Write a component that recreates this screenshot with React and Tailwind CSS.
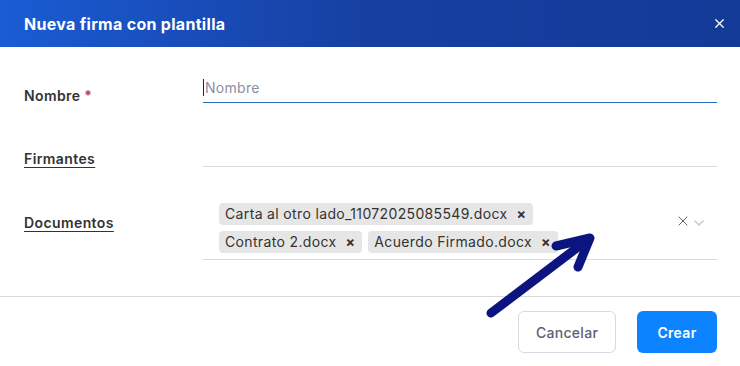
import { X, ChevronDown } from 'lucide-react'

function Tag({ label }) {
  return (
    <span className="inline-flex items-center h-[22px] pl-[6px] pr-[7px] rounded-[4px] bg-[#e6e6e6] text-[14px] tracking-[0.35px] text-[#333] leading-none">
      {label}
      <span className="ml-[9px] text-[14px] font-bold text-[#333]">×</span>
    </span>
  )
}

export default function App() {
  return (
    <div className="relative w-[740px] h-[366px] bg-white overflow-hidden" style={{ fontFamily: 'Inter, "Noto Sans", sans-serif' }}>
      {/* Header */}
      <header className="h-[47px] flex items-center justify-between pl-[24px] pr-[13px] bg-gradient-to-r from-[#1a5cd4] via-[#163fa0] to-[#143a98]">
        <h1 className="text-white font-bold text-[16px] tracking-[0.3px]">Nueva firma con plantilla</h1>
        <X className="w-[15px] h-[15px] text-white" strokeWidth={2} />
      </header>

      {/* Body */}
      <div className="pl-[24px] pr-[23px]">
        <div className="flex items-end h-[56px]">
          <div className="w-[179px] leading-[14px] text-[14px] font-semibold tracking-[0.4px] text-[#333]">
            Nombre <span className="text-[#c0392b]">*</span>
          </div>
          <div className="flex-1 relative border-b-[1.5px] border-[#2b6cc4] h-[31px] flex items-center">
            <span className="w-px h-[17px] bg-[#222] mr-[1px]" />
            <span className="text-[14px] tracking-[0.3px] text-[#8a8fa3]">Nombre</span>
          </div>
        </div>

        <div className="flex items-end h-[64px]">
          <div className="w-[179px] pb-[1px] leading-[14px] text-[14px] font-semibold tracking-[0.4px] text-[#333] underline underline-offset-[3px]">Firmantes</div>
          <div className="flex-1 border-b border-[#d9d9e0] h-[31px]" />
        </div>

        <div className="flex items-center h-[93px]">
          <div className="w-[179px] text-[14px] font-semibold tracking-[0.4px] text-[#333] underline underline-offset-[3px] pt-[17px]">Documentos</div>
          <div className="flex-1 border-b border-[#d9d9e0] mt-[36px] pb-[6px] pl-[16px] flex items-center">
            <div className="flex-1 flex flex-wrap gap-x-[6px] gap-y-[6px] w-[360px] max-w-[360px]">
              <Tag label="Carta al otro lado_11072025085549.docx" />
              <Tag label="Contrato 2.docx" />
              <Tag label="Acuerdo Firmado.docx" />
            </div>
            <div className="ml-auto flex items-center mr-[10px] -mt-[14px]">
              <X className="w-[16px] h-[16px] text-[#555]" strokeWidth={1.4} />
              <ChevronDown className="w-[16px] h-[16px] text-[#ccc] mt-[3px]" strokeWidth={2.5} />
            </div>
          </div>
        </div>
      </div>

      {/* Footer */}
      <div className="mt-[36px] border-t border-[#d9d9e0] flex justify-end gap-[21px] pt-[14px] pr-[23px]">
        <button className="w-[98px] h-[42px] rounded-[6px] border border-[#d9d9e3] bg-white text-[14px] font-medium tracking-[0.3px] text-[#5c5f73]">Cancelar</button>
        <button className="w-[80px] h-[42px] rounded-[6px] bg-[#0d84ff] text-[14px] font-semibold tracking-[0.3px] text-white">Crear</button>
      </div>

      {/* Annotation arrow */}
      <svg className="absolute left-0 top-0 pointer-events-none" width="740" height="366">
        <g stroke="#0c1480" strokeWidth="9" strokeLinecap="round" strokeLinejoin="round" fill="none">
          <line x1="491" y1="313" x2="586" y2="241" />
          <polyline points="556,246 590,238 578,267" />
        </g>
      </svg>
    </div>
  )
}
